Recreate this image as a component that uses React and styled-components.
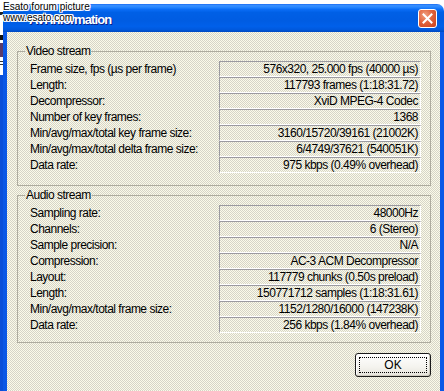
import React from 'react';
import styled, { createGlobalStyle } from 'styled-components';

const Global = createGlobalStyle`
  html, body { margin: 0; padding: 0; background: #fff; }
  body { width: 444px; height: 391px; overflow: hidden; }
`;

const UI = `"Liberation Sans", Arial, sans-serif`;

const Screen = styled.div`
  position: relative;
  width: 444px;
  height: 391px;
  overflow: hidden;
  background: #fff;
  display: flex;
  align-items: flex-start;
  padding-top: 4px;
  box-sizing: border-box;
`;

const DesktopStrip = styled.div`
  width: 3px;
  flex: none;
  align-self: stretch;
  display: flex;
  flex-direction: column;
`;

const StripBit = styled.div`
  flex: ${p => (p.$fill ? '1' : 'none')};
  height: ${p => p.$h || 0}px;
  background: ${p => p.$c};
`;

const Window = styled.div`
  width: 441px;
  flex: none;
  display: flex;
  flex-direction: column;
`;

const TitleBar = styled.div`
  height: 28px;
  display: flex;
  align-items: center;
  padding: 0 7px 0 26px;
  border-radius: 7px 7px 0 0;
  background: linear-gradient(to bottom,
    #1c6cf2 0%, #3a92ff 6%, #2585ff 12%, #0a6cf5 20%, #0060e6 30%,
    #005ce2 60%, #0060ea 80%, #0058dc 92%, #0048c0 100%);
`;

const Title = styled.div`
  flex: 1;
  font-family: ${UI};
  font-weight: bold;
  font-size: 13px;
  letter-spacing: -0.9px;
  color: #fff;
  text-shadow: 1px 1px 0 #0a1e8a;
  padding-top: 2px;
`;

const CloseBtn = styled.div`
  width: 19px;
  height: 19px;
  border: 1px solid #fff;
  border-radius: 3px;
  box-sizing: border-box;
  display: flex;
  align-items: center;
  justify-content: center;
  background: radial-gradient(circle at 35% 30%, #f0a080 0%, #e2643e 45%, #c8401c 100%);
  margin-top: 1px;
`;

const Body = styled.div`
  height: 359px;
  border-left: 4px solid #0a58e6;
  border-right: 4px solid #0a58e6;
  border-bottom: 4px solid #0a58e6;
  box-shadow: inset 1px 0 0 #0846c8;
  display: flex;
  flex-direction: column;
`;

const Client = styled.div`
  flex: 1;
  padding: 13px 9px 0 10px;
  display: flex;
  flex-direction: column;
  background: repeating-conic-gradient(#d6d4c8 0 25%, #fbfbe9 0 50%) 0 0 / 2px 2px;
`;

const Group = styled.fieldset`
  margin: ${p => p.$mt}px 0 0 0;
  padding: 4px 9px ${p => p.$pb}px 12px;
  border: 1px solid #aeac9f;
  min-width: 0;
  display: flex;
  flex-direction: column;
`;

const Legend = styled.legend`
  font-family: ${UI};
  font-size: 12px;
  letter-spacing: -0.5px;
  line-height: 12px;
  padding: 0 1px;
  margin-left: -5px;
  color: #000;
`;

const Row = styled.div`
  display: flex;
  align-items: center;
  height: 16px;
`;

const Label = styled.div`
  flex: 1;
  min-width: 0;
  font-family: ${UI};
  font-size: 12px;
  letter-spacing: -0.5px;
  line-height: 16px;
  color: #000;
  white-space: nowrap;
`;

const Value = styled.div`
  flex: none;
  width: 202px;
  height: 16px;
  box-sizing: border-box;
  border-top: 1px solid #9b9aa0;
  border-left: 1px solid #9b9aa0;
  border-bottom: 1px solid #fff;
  border-right: 1px solid #fff;
  text-align: right;
  padding-right: 2px;
  font-family: ${UI};
  font-size: 12px;
  letter-spacing: -0.5px;
  line-height: 14px;
  color: #000;
  white-space: nowrap;
`;

const Footer = styled.div`
  display: flex;
  justify-content: flex-end;
  margin-top: 10px;
`;

const Button = styled.button`
  width: 76px;
  height: 24px;
  padding: 3px;
  border: 1px solid #1a1a1a;
  border-radius: 3px;
  background: linear-gradient(to bottom, #ffffff 0%, #f4f3ee 60%, #e6e3da 100%);
  box-shadow: inset -1px -1px 0 #d0ccbf, inset 1px 1px 0 #fff;
  display: flex;
`;

const Focus = styled.span`
  flex: 1;
  border: 1px dotted #000;
  display: flex;
  align-items: center;
  justify-content: center;
  font-family: ${UI};
  font-size: 12px;
  color: #000;
`;

const Watermark = styled.div`
  position: absolute;
  left: 3px;
  top: 1px;
  font-family: "Liberation Sans", Arial, sans-serif;
  font-size: 10px;
  line-height: 11px;
  color: #000;
  text-shadow: 1px 0 0 #fff, -1px 0 0 #fff, 0 1px 0 #fff, 0 -1px 0 #fff,
    1px 1px 0 #fff, -1px -1px 0 #fff, 1px -1px 0 #fff, -1px 1px 0 #fff;
`;

const video = [
  ['Frame size, fps (µs per frame)', '576x320, 25.000 fps (40000 µs)'],
  ['Length:', '117793 frames (1:18:31.72)'],
  ['Decompressor:', 'XviD MPEG-4 Codec'],
  ['Number of key frames:', '1368'],
  ['Min/avg/max/total key frame size:', '3160/15720/39161 (21002K)'],
  ['Min/avg/max/total delta frame size:', '6/4749/37621 (540051K)'],
  ['Data rate:', '975 kbps (0.49% overhead)'],
];

const audio = [
  ['Sampling rate:', '48000Hz'],
  ['Channels:', '6 (Stereo)'],
  ['Sample precision:', 'N/A'],
  ['Compression:', 'AC-3 ACM Decompressor'],
  ['Layout:', '117779 chunks (0.50s preload)'],
  ['Length:', '150771712 samples (1:18:31.61)'],
  ['Min/avg/max/total frame size:', '1152/1280/16000 (147238K)'],
  ['Data rate:', '256 kbps (1.84% overhead)'],
];

const Rows = ({ data }) =>
  data.map(([l, v], i) => (
    <Row key={i}>
      <Label>{l}</Label>
      <Value>{v}</Value>
    </Row>
  ));

export default function App() {
  return (
    <>
      <Global />
      <Screen>
        <DesktopStrip>
          <StripBit $h={8} $c="#fff" />
          <StripBit $h={3} $c="#222" />
          <StripBit $h={20} $c="#fff" />
          <StripBit $h={5} $c="#111" />
          <StripBit $h={3} $c="#fff" />
          <StripBit $h={14} $c="#5a3a6a" />
          <StripBit $h={4} $c="#fff" />
          <StripBit $h={1} $c="#333" />
          <StripBit $h={2} $c="#fff" />
          <StripBit $h={1} $c="#333" />
          <StripBit $h={10} $c="#fff" />
          <StripBit $fill $c="#0a4fd8" />
        </DesktopStrip>
        <Window>
          <TitleBar>
            <Title>AVI Information</Title>
            <CloseBtn>
              <svg width="11" height="11" viewBox="0 0 11 11">
                <path d="M1.5 1.5 L9.5 9.5 M9.5 1.5 L1.5 9.5" stroke="#fff" strokeWidth="2" strokeLinecap="square" />
              </svg>
            </CloseBtn>
          </TitleBar>
          <Body>
            <Client>
              <Group $mt={0} $pb={12}>
                <Legend>Video stream</Legend>
                <Rows data={video} />
              </Group>
              <Group $mt={3} $pb={9}>
                <Legend>Audio stream</Legend>
                <Rows data={audio} />
              </Group>
              <Footer>
                <Button type="button">
                  <Focus>OK</Focus>
                </Button>
              </Footer>
            </Client>
          </Body>
        </Window>
        <Watermark>
          Esato forum picture
          <br />
          www.esato.com
        </Watermark>
      </Screen>
    </>
  );
}
